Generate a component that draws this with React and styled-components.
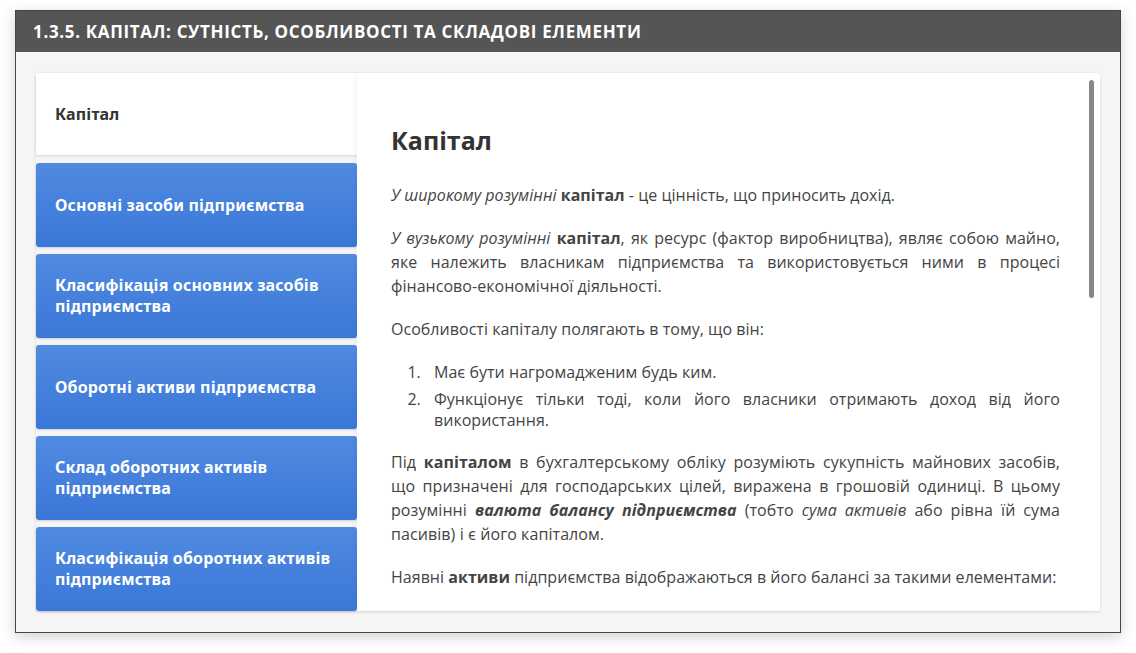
import React from "react";
import styled, { createGlobalStyle } from "styled-components";

const Global = createGlobalStyle`
  html, body { margin: 0; padding: 0; background: #ffffff; }
  body { font-family: "Open Sans", "Noto Sans", sans-serif; }
  * { box-sizing: border-box; }
`;

const Page = styled.div`
  padding: 10px 15px 0 15px;
  width: 1136px;
  height: 653px;
`;

const Frame = styled.div`
  width: 1106px;
  height: 623px;
  border: 1px solid #444;
  background: #f5f5f5;
  box-shadow: 0 4px 14px rgba(0, 0, 0, 0.18);
  display: flex;
  flex-direction: column;
  overflow: hidden;
`;

const Header = styled.div`
  height: 41px;
  flex: none;
  background: #555555;
  color: #ffffff;
  font-family: "Open Sans", sans-serif;
  font-weight: 700;
  font-size: 17px;
  display: flex;
  align-items: center;
  padding-left: 17px;
  letter-spacing: 0.66px;
`;

const Body = styled.div`
  flex: 1;
  min-height: 0;
  padding: 21px 20px 21px 20px;
  display: flex;
`;

const Card = styled.div`
  flex: 1;
  min-height: 0;
  display: flex;
  background: #f5f5f5;
  border-radius: 3px;
  box-shadow: 0 1px 3px rgba(0, 0, 0, 0.12);
`;

const Sidebar = styled.div`
  width: 321px;
  flex: none;
  display: flex;
  flex-direction: column;
  gap: 7px;
  background: #f5f5f5;
`;

const Tab = styled.div`
  height: ${(p) => (p.$active ? "82px" : "auto")};
  flex: ${(p) => (p.$active ? "none" : "1")};
  margin-bottom: ${(p) => (p.$active ? "1px" : "0")};
  display: flex;
  align-items: center;
  padding: 0 20px 0 19px;
  font-family: "Noto Sans", "Open Sans", sans-serif;
  font-weight: 700;
  font-size: 16px;
  line-height: 21px;
  border-radius: ${(p) => (p.$active ? "3px 0 0 3px" : "3px")};
  margin-right: ${(p) => (p.$active ? "-2px" : "0")};
  position: relative;
  color: ${(p) => (p.$active ? "#333" : "#ffffff")};
  background: ${(p) =>
    p.$active ? "#ffffff" : "linear-gradient(180deg, #508be0 0%, #3a77d8 100%)"};
  box-shadow: ${(p) =>
    p.$active ? "0 1px 3px rgba(0,0,0,0.12)" : "0 1px 2px rgba(0,0,0,0.15)"};
  letter-spacing: 0.15px;
`;

const Content = styled.div`
  flex: 1;
  min-height: 0;
  position: relative;
  background: #ffffff;
  border-radius: 0 3px 3px 0;
  overflow: hidden;
  box-shadow: -2px 0 4px rgba(0, 0, 0, 0.04);
  z-index: 1;
`;

const Scroll = styled.div`
  padding: 49px 40px 0 34px;
  color: #444;
  font-size: 16px;
  line-height: 24px;
  letter-spacing: 0.03px;
`;

const Thumb = styled.div`
  position: absolute;
  right: 6px;
  top: 7px;
  width: 5px;
  height: 218px;
  border-radius: 3px;
  background: #888;
`;

const Title = styled.h2`
  margin: 0 0 25px 0;
  font-size: 25px;
  line-height: 36px;
  font-weight: 700;
  color: #333;
  letter-spacing: 0;
`;

const P = styled.p`
  margin: 0 0 19px 0;
  text-align: justify;
  letter-spacing: ${(p) => (p.$spaced ? "0.08px" : "inherit")};
`;

const List = styled.ol`
  margin: 21px 0 19px 0;
  padding-left: 34px;
  line-height: 21px;
`;

const Item = styled.li`
  margin-bottom: 6px;
  text-align: justify;
  padding-left: 9px;
`;

const tabs = [
  "Основні засоби підприємства",
  "Класифікація основних засобів підприємства",
  "Оборотні активи підприємства",
  "Склад оборотних активів підприємства",
  "Класифікація оборотних активів підприємства",
];

export default function App() {
  return (
    <Page>
      <Global />
      <Frame>
        <Header>1.3.5. КАПІТАЛ: СУТНІСТЬ, ОСОБЛИВОСТІ ТА СКЛАДОВІ ЕЛЕМЕНТИ</Header>
        <Body>
          <Card>
            <Sidebar>
              <Tab $active>Капітал</Tab>
              {tabs.map((t) => (
                <Tab key={t}>{t}</Tab>
              ))}
            </Sidebar>
            <Content>
              <Thumb />
              <Scroll>
                <Title>Капітал</Title>
                <P>
                  <i>У широкому розумінні</i> <b>капітал</b> - це цінність, що приносить дохід.
                </P>
                <P>
                  <i>У вузькому розумінні</i> <b>капітал</b>, як ресурс (фактор виробництва), являє собою
                  майно, яке належить власникам підприємства та використовується ними в процесі
                  фінансово-економічної діяльності.
                </P>
                <P>Особливості капіталу полягають в тому, що він:</P>
                <List>
                  <Item>Має бути нагромадженим будь ким.</Item>
                  <Item>
                    Функціонує тільки тоді, коли його власники отримають доход від його використання.
                  </Item>
                </List>
                <P $spaced>
                  Під <b>капіталом</b> в бухгалтерському обліку розуміють сукупність майнових засобів,
                  що призначені для господарських цілей, виражена в грошовій одиниці. В цьому
                  розумінні{" "}
                  <b>
                    <i>валюта балансу підприємства</i>
                  </b>{" "}
                  (тобто <i>сума активів</i> або рівна їй сума пасивів) і є його капіталом.
                </P>
                <P>
                  Наявні <b>активи</b> підприємства відображаються в його балансі за такими елементами:
                </P>
              </Scroll>
            </Content>
          </Card>
        </Body>
      </Frame>
    </Page>
  );
}
